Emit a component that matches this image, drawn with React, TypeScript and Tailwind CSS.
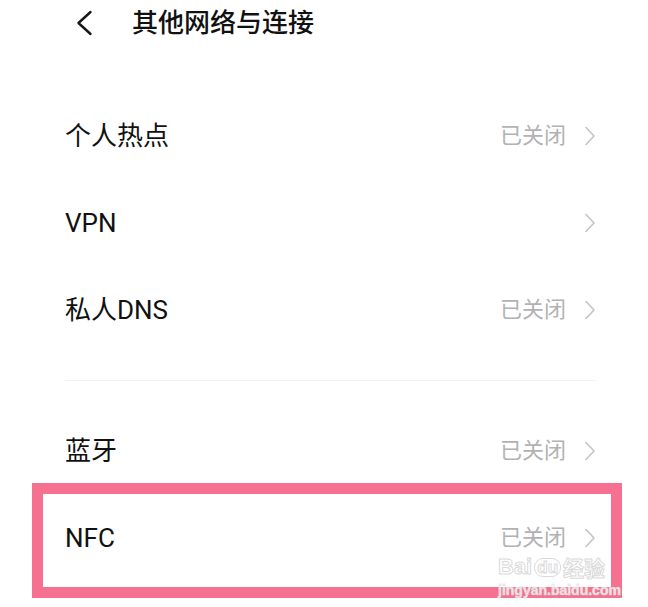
const font = "font-['Roboto','Noto_Sans_CJK_SC',sans-serif]";

function Chevron() {
  return (
    <svg width="12" height="20" viewBox="0 0 12 20" fill="none" className="shrink-0">
      <path d="M2 1.5 L10 10 L2 18.5" stroke="#c4c4c4" strokeWidth="1.6" strokeLinecap="round" strokeLinejoin="round" />
    </svg>
  );
}

function BackArrow() {
  return (
    <svg width="20" height="26" viewBox="0 0 20 26" fill="none" className="shrink-0">
      <path d="M16.5 2 L4.5 13 L16.5 24" stroke="#161616" strokeWidth="2.4" strokeLinecap="round" strokeLinejoin="round" />
    </svg>
  );
}

function Row({ label, value }: { label: string; value?: string }) {
  return (
    <div className="flex h-[87px] items-center justify-between pl-[65px] pr-[52px]">
      <span className="text-[26px] leading-none text-[#111]">{label}</span>
      <div className="flex items-center gap-[18px]">
        {value && <span className="text-[22px] leading-none text-[#b2b2b2]">{value}</span>}
        <Chevron />
      </div>
    </div>
  );
}

export default function App() {
  return (
    <div className={`${font} relative h-[607px] w-[648px] overflow-hidden bg-white`}>
      {/* header */}
      <div className="flex h-[44px] items-center pl-[74px] pt-[2px]">
        <BackArrow />
        <span className="ml-[38px] text-[26px] font-medium leading-none text-[#111]">其他网络与连接</span>
      </div>

      <div className="pt-[48px]">
        <Row label="个人热点" value="已关闭" />
        <Row label="VPN" />
        <Row label="私人DNS" value="已关闭" />
      </div>

      <div className="flex h-[54px] items-center pl-[65px] pr-[51px]">
        <div className="h-px w-full bg-[#f2f2f2]" />
      </div>

      <Row label="蓝牙" value="已关闭" />

      <div className="relative">
        <Row label="NFC" value="已关闭" />
        {/* highlight frame */}
        <div className="pointer-events-none absolute left-[32px] top-[-11px] h-[115px] w-[590px] border-[11px] border-[#f5718f]" />
        {/* watermark */}
        <div className="pointer-events-none absolute left-[498px] top-[62px] flex flex-col items-start leading-none">
          <div className="flex items-center gap-[2px] font-['Liberation_Sans',sans-serif] text-[22px] font-bold leading-none text-white/80 [-webkit-text-stroke:1px_#dadada]">
            <span>Bai</span>
            <span className="rounded-[9px] border border-[#dadada] px-[2px] text-[17px] leading-none">du</span>
            <span className="font-['Noto_Sans_CJK_SC',sans-serif] text-[21px] leading-none">经验</span>
          </div>
          <span className="mt-[5px] font-['Liberation_Sans',sans-serif] text-[14px] font-bold leading-none text-white/80 [-webkit-text-stroke:0.6px_#dadada]">
            jingyan.baidu.com
          </span>
        </div>
      </div>
    </div>
  );
}
